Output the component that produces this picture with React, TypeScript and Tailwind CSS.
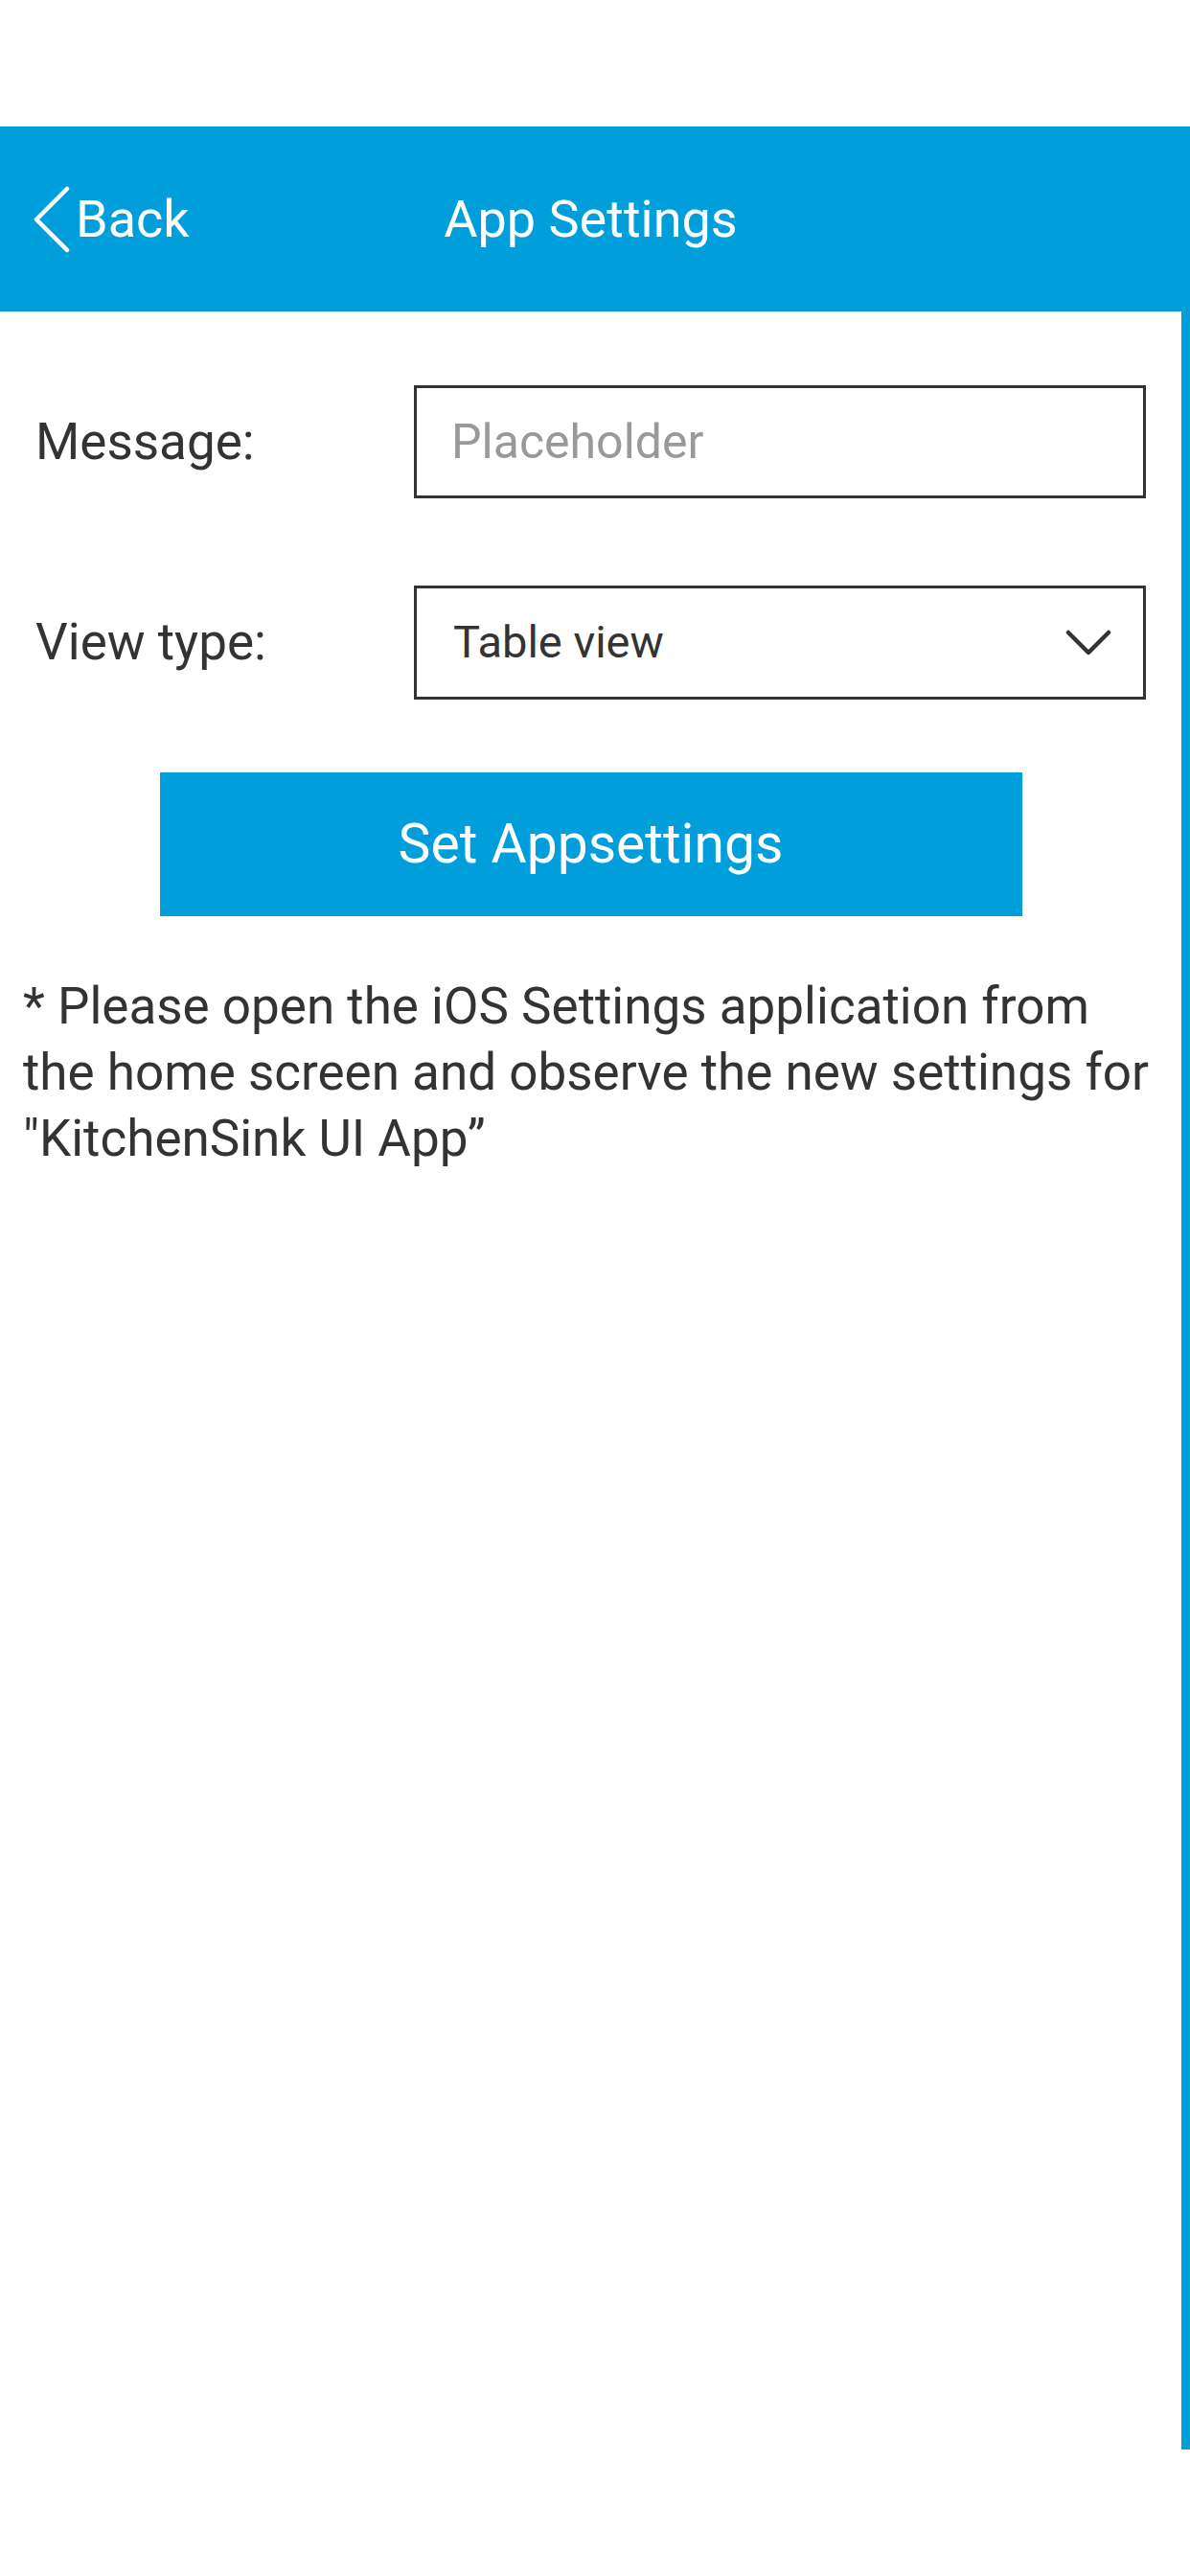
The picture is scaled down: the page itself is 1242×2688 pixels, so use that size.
import { useState } from "react";

const blue = "bg-[#009fdb]";

function BackChevron() {
  return (
    <svg width="42" height="72" viewBox="0 0 42 72" fill="none" aria-hidden>
      <path
        d="M36 4 L4 36 L36 68"
        stroke="white"
        strokeWidth="4.5"
        strokeLinecap="round"
        strokeLinejoin="round"
      />
    </svg>
  );
}

function DownChevron() {
  return (
    <svg width="48" height="30" viewBox="0 0 48 30" fill="none" aria-hidden>
      <path
        d="M3 4 L24 25 L45 4"
        stroke="#333333"
        strokeWidth="4.5"
        strokeLinecap="round"
        strokeLinejoin="round"
      />
    </svg>
  );
}

export default function App() {
  const [message, setMessage] = useState("");

  return (
    <div className="min-h-[2688px] w-[1242px] bg-white font-['Roboto','Liberation_Sans',sans-serif] text-[#333333]">
      {/* status bar area, blank in the capture */}
      <div className="h-[132px]" />

      <header className={clsx(blue, "grid h-[193px] grid-cols-[1fr_auto_1fr] items-center pr-[9px] text-white")}>
        <button className="flex items-center gap-[3px] justify-self-start pl-[34px]">
          <BackChevron />
          <span className="text-[54px] leading-none">Back</span>
        </button>
        <h1 className="text-[54px] leading-none font-normal">App Settings</h1>
        <div />
      </header>

      <div className="flex">
        <main className="flex-1">
          <div className="mt-[77px] flex items-center pl-[37px]">
            <label htmlFor="msg" className="w-[395px] text-[53px] leading-none">
              Message:
            </label>
            <input
              id="msg"
              value={message}
              onChange={(e) => setMessage(e.target.value)}
              placeholder="Placeholder"
              className="h-[118px] w-[764px] border-[3px] border-[#333333] pl-[36px] text-[50px] text-[#333333] outline-none placeholder:text-[#999999]"
            />
          </div>

          <div className="mt-[91px] flex items-center pl-[37px]">
            <span className="w-[395px] text-[53px] leading-none">View type:</span>
            <div className="flex h-[119px] w-[764px] items-center justify-between border-[3px] border-[#333333] pl-[38px] pr-[33px]">
              <span className="text-[47px]">Table view</span>
              <DownChevron />
            </div>
          </div>

          <div className="mt-[76px] flex justify-center">
            <button className={clsx(blue, "h-[150px] w-[900px] text-[57px] text-white")}>
              Set Appsettings
            </button>
          </div>

          <p className="mt-[60px] pl-[24px] pr-[28px] text-[53px] leading-[69px]">
            * Please open the iOS Settings application from the home screen and observe the new
            settings for "KitchenSink UI App”
          </p>
        </main>
        <div className={clsx(blue, "h-[2231px] w-[9px] shrink-0")} />
      </div>
    </div>
  );
}

function clsx(...parts: string[]) {
  return parts.join(" ");
}
